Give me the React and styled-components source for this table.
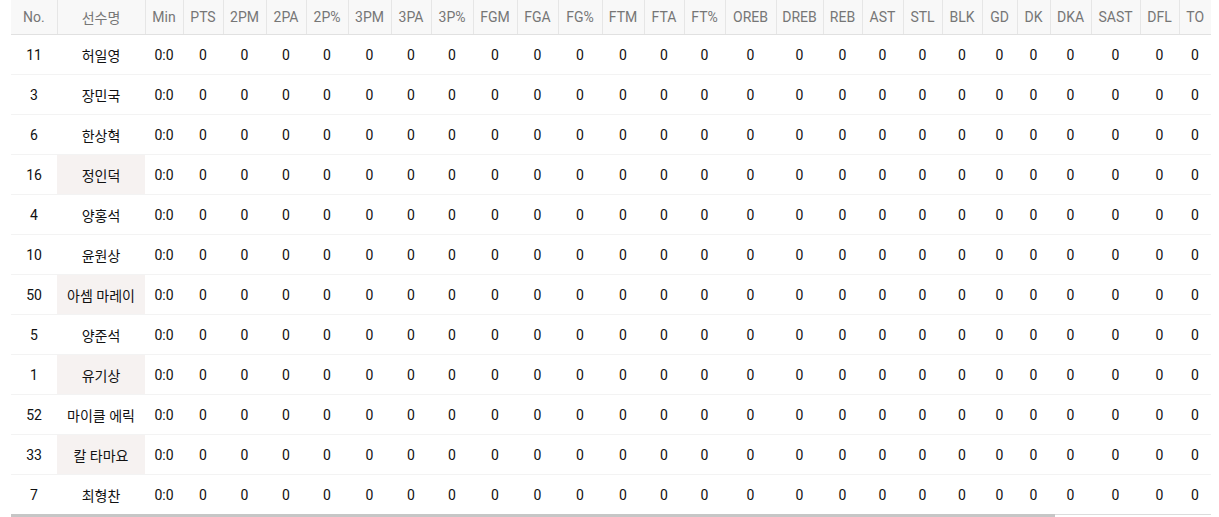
import React from 'react';
import styled, { createGlobalStyle } from 'styled-components';

const GlobalStyle = createGlobalStyle`
    html, body {
        margin: 0;
        padding: 0;
        background: #ffffff;
        overflow: hidden;
    }
    body {
        font-family: Roboto, 'Noto Sans CJK KR', 'Liberation Sans', sans-serif;
        color: #222222;
    }
`

const Page = styled.div`
    display: flex;
    padding: 0 8px 0 11px;
`

const ScrollBox = styled.div`
    display: flex;
    flex-direction: column;
    width: 1200px;
    overflow: hidden;
`

const ScrollTrack = styled.div`
    display: flex;
    height: 8px;
    background: #ffffff;
    box-shadow: inset 0 1px 0 #dcdcdc;
`

const ScrollThumb = styled.div`
    height: 100%;
    background: #c6c6c6;
`

const Table = styled.table`
    table-layout: fixed;
    border-collapse: collapse;
    border-spacing: 0;
    width: 1200px;
    font-size: 14px;
`

const HeadCell = styled.th`
    height: 34px;
    padding: 0;
    background: #f8f8f8;
    color: #767676;
    font-weight: 400;
    text-align: center;
    white-space: nowrap;
    border-right: 1px solid #e6e6e6;
    border-bottom: 1px solid #e1e1e1;
    &:last-child {
        border-right: none;
    }
`

const Row = styled.tr`
    td {
        border-bottom: 1px solid #f3f3f3;
    }
    &:last-child td {
        border-bottom: none;
    }
`

const Cell = styled.td`
    height: 39px;
    padding: 0;
    text-align: center;
    white-space: nowrap;
    color: #111111;
    background: ${p => (p.$marked ? '#f6f2f1' : 'transparent')};
`

const columns = [
    ['No.', 46], ['선수명', 88], ['Min', 38], ['PTS', 40], ['2PM', 43], ['2PA', 40],
    ['2P%', 42], ['3PM', 43], ['3PA', 40], ['3P%', 42], ['FGM', 44], ['FGA', 41],
    ['FG%', 44], ['FTM', 42], ['FTA', 40], ['FT%', 41], ['OREB', 51], ['DREB', 47],
    ['REB', 39], ['AST', 41], ['STL', 39], ['BLK', 40], ['GD', 35], ['DK', 33],
    ['DKA', 41], ['SAST', 49], ['DFL', 39], ['TO', 32],
]

const players = [
    [11, '허일영'], [3, '장민국'], [6, '한상혁'], [16, '정인덕', true],
    [4, '양홍석'], [10, '윤원상'], [50, '아셈 마레이', true], [5, '양준석'],
    [1, '유기상', true], [52, '마이클 에릭'], [33, '칼 타마요', true], [7, '최형찬'],
]

const visibleRatio = 1044 / 1200;

export default function App() {
    const statCount = columns.length - 3;
    return <>
        <GlobalStyle />
        <Page>
            <ScrollBox>
                <Table>
                    <colgroup>
                        {columns.map(([label, width]) => <col key={label} style={{ width }} />)}
                    </colgroup>
                    <thead>
                        <tr>
                            {columns.map(([label]) => <HeadCell key={label}>{label}</HeadCell>)}
                        </tr>
                    </thead>
                    <tbody>
                        {players.map(([no, name, marked]) => <Row key={no}>
                            <Cell>{no}</Cell>
                            <Cell $marked={marked}>{name}</Cell>
                            <Cell>0:0</Cell>
                            {Array.from({ length: statCount }).map((_, i) => <Cell key={i}>0</Cell>)}
                        </Row>)}
                    </tbody>
                </Table>
                <ScrollTrack>
                    <ScrollThumb style={{ width: `${visibleRatio * 100}%` }} />
                </ScrollTrack>
            </ScrollBox>
        </Page>
    </>
}
